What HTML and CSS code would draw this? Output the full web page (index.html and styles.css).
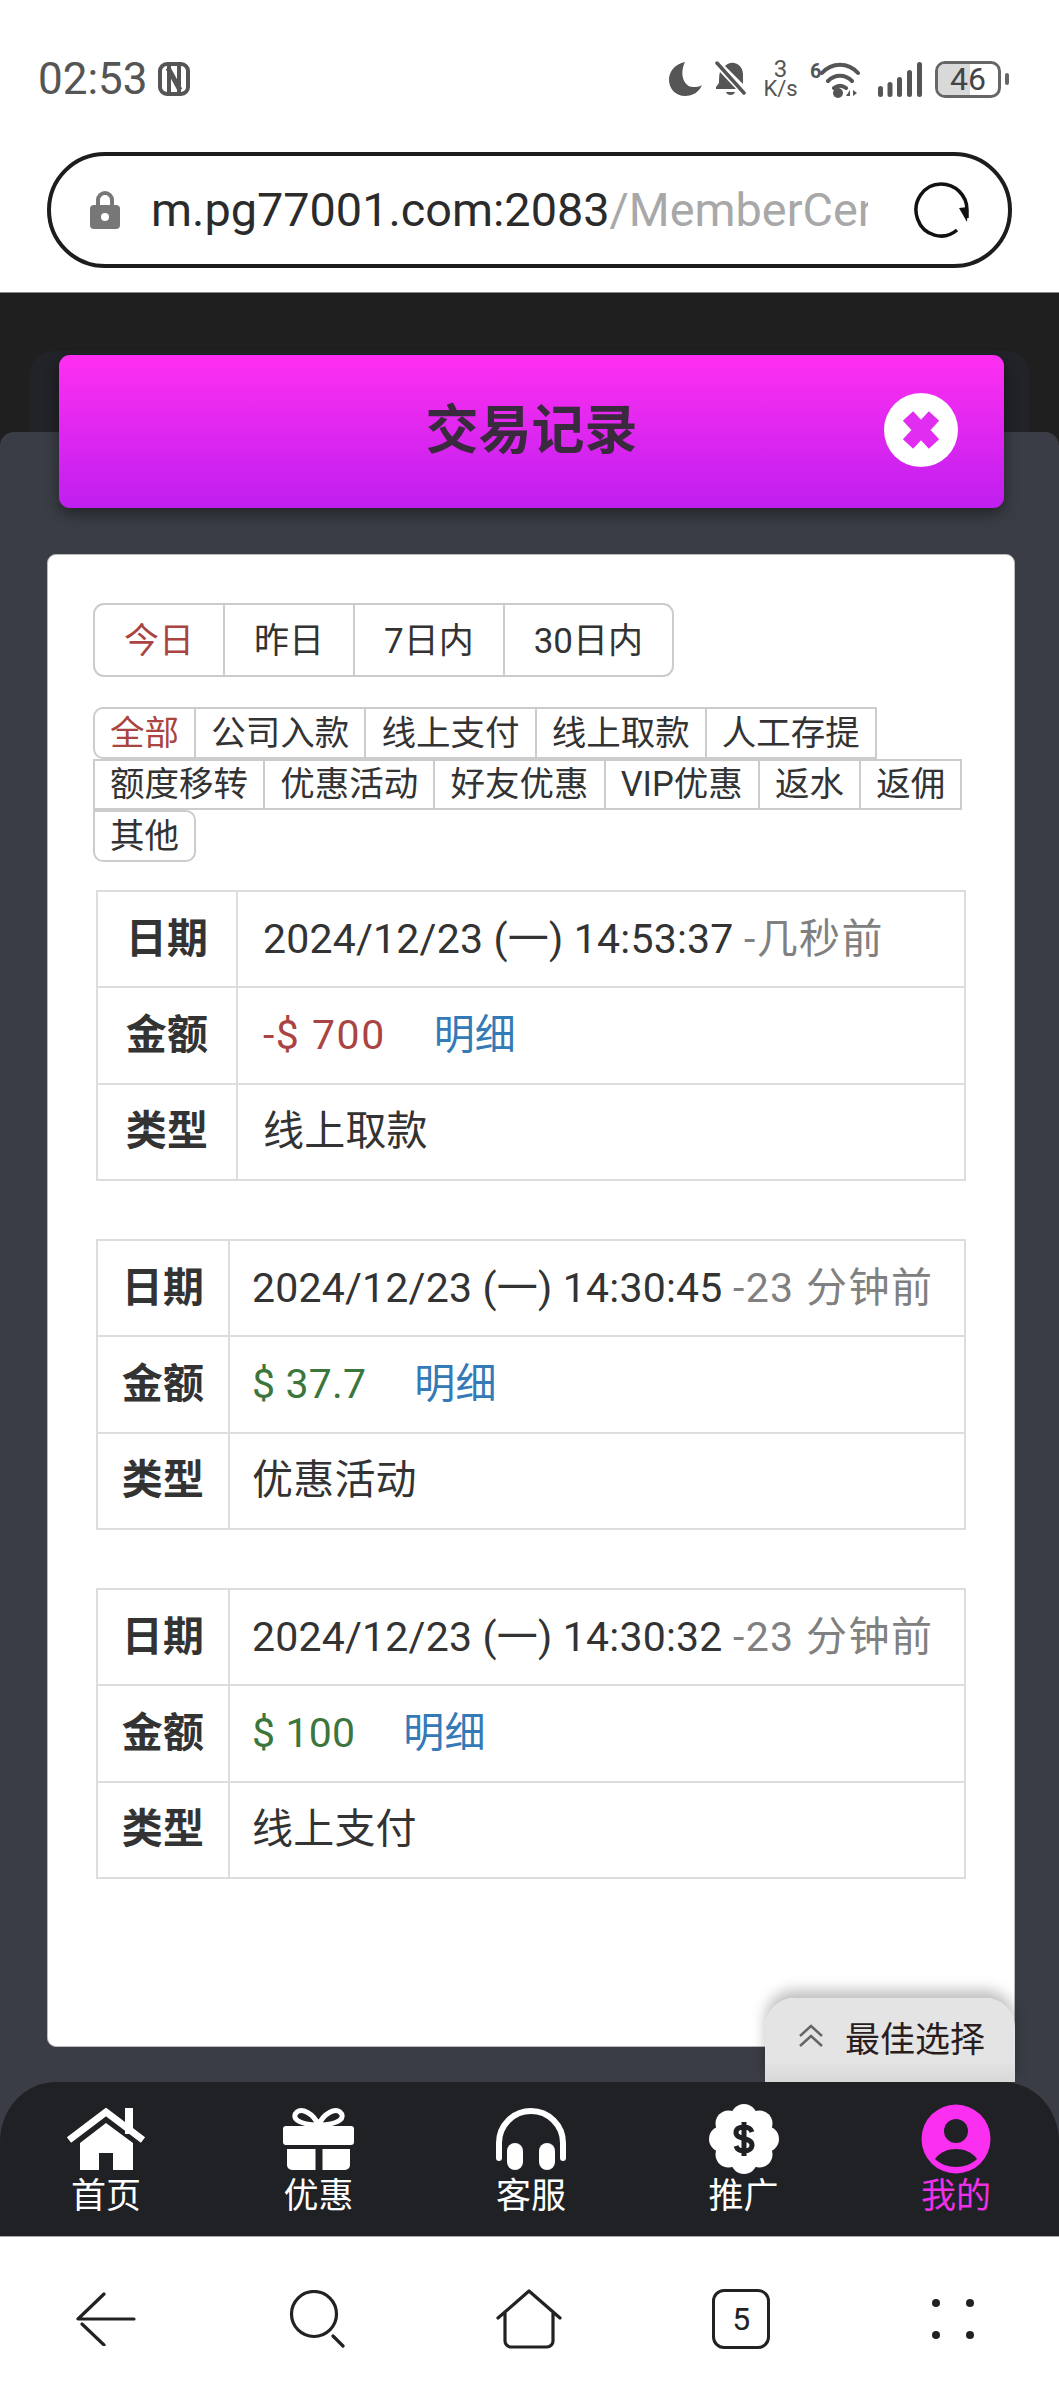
FILE: index.html
```html
<!DOCTYPE html>
<html lang="zh-CN">
<head>
<meta charset="utf-8">
<title>交易记录</title>
<link rel="stylesheet" href="styles.css">
</head>
<body>
<header class="chrome">
  <div class="status">
    <div class="clock">
      <span class="time">02:53</span>
      <svg class="nfc" viewBox="0 0 32 34"><rect x="2" y="2" width="28" height="30" rx="7" fill="none" stroke="#555" stroke-width="4"/><path d="M11 4v26M21 4v26" stroke="#555" stroke-width="4"/><path d="M10 6l12 22" stroke="#555" stroke-width="5"/></svg>
    </div>
    <div class="indicators">
      <svg class="i-moon" viewBox="0 0 33 34"><path d="M16 0C6 2 0 9 0 18c0 9 7 16 16 16 8 0 14-4 17-11-3 2-6 2-9 2C15 25 10 12 16 0z" fill="#555"/></svg>
      <svg class="i-bell" viewBox="0 0 31 36"><path d="M2 2l27 30" stroke="#555" stroke-width="3.500" stroke-linecap="round"/><path d="M5 11c-1 3-1 8-1 11l-3 4v2h20zM10 5c2-2 6-4 9-3 6 1 9 6 9 12v9z" fill="#555"/><path d="M11 31h9c-1 4-8 4-9 0z" fill="#555"/></svg>
      <div class="speed"><span class="speed-num">3</span><span>K/s</span></div>
      <div class="wifi">
        <span class="wifi-six">6</span>
        <svg viewBox="0 0 40 37" class="i-wifi"><path d="M2 12C12 1 28 1 38 12M8 20c7-7 17-7 24 0M14 27c4-3 8-3 12 0" fill="none" stroke="#555" stroke-width="4" stroke-linecap="round"/><circle cx="18" cy="32" r="5" fill="#555"/><path d="M26 35l4-6v6zM33 29l4 3-4 3z" fill="#555"/></svg>
      </div>
      <svg class="i-signal" viewBox="0 0 44 35"><g fill="#555"><rect x="0" y="24" width="5" height="11" rx="2.500"/><rect x="9.500" y="20" width="5" height="15" rx="2.500"/><rect x="19" y="15" width="5" height="20" rx="2.500"/><rect x="29" y="8" width="5" height="27" rx="2.500"/><rect x="39" y="0" width="5" height="35" rx="2.500"/></g></svg>
      <div class="battery"><span class="battery-fill"></span><span class="battery-num">46</span></div>
      <span class="battery-nub"></span>
    </div>
  </div>
  <div class="urlbar">
    <svg class="lock" viewBox="0 0 30 38"><path d="M8 16V9a7 7 0 0 1 14 0v7" fill="none" stroke="#777" stroke-width="4"/><rect y="14" width="30" height="24" rx="4" fill="#777"/><circle cx="15" cy="26" r="4" fill="#fff"/></svg>
    <div class="url"><span class="url-host">m.pg77001.com:2083</span><span class="url-path">/MemberCenter</span></div>
    <svg class="reload" viewBox="0 0 56 58"><path d="M28 3a25 26 0 1 0 16 46" fill="none" stroke="#111" stroke-width="3.500"/><path d="M28 3c14 0 26 11 26 26v8" fill="none" stroke="#111" stroke-width="3.500"/><path d="M46 27l8 14 1-15z" fill="#111"/></svg>
  </div>
</header>

<main class="stage">
  <div class="shell"></div>
  <div class="title-bar">
    <h1 class="title">交易记录</h1>
    <svg class="close" viewBox="0 0 74 74"><circle cx="37" cy="37" r="37" fill="#fff"/><path d="M24 23l26 28M50 23L24 51" stroke="#e12cf1" stroke-width="14" stroke-linecap="butt"/></svg>
  </div>
  <section class="sheet">
    <div class="card">
      <div class="ranges">
        <a class="range active">今日</a><a class="range">昨日</a><a class="range">7日内</a><a class="range">30日内</a>
      </div>
      <div class="filters">
        <a class="chip active round-l">全部</a><a class="chip">公司入款</a><a class="chip">线上支付</a><a class="chip">线上取款</a><a class="chip">人工存提</a>
        <a class="chip">额度移转</a><a class="chip">优惠活动</a><a class="chip">好友优惠</a><a class="chip">VIP优惠</a><a class="chip">返水</a><a class="chip">返佣</a>
        <a class="chip round-r">其他</a>
      </div>

      <table class="record wide">
        <tr><th>日期</th><td>2024/12/23 (一) 14:53:37 <span class="ago">-几秒前</span></td></tr>
        <tr><th>金额</th><td><span class="minus">-$ 700</span><a class="detail">明细</a></td></tr>
        <tr><th>类型</th><td>线上取款</td></tr>
      </table>
      <table class="record">
        <tr><th>日期</th><td>2024/12/23 (一) 14:30:45 <span class="ago">-23 分钟前</span></td></tr>
        <tr><th>金额</th><td><span class="plus">$ 37.7</span><a class="detail">明细</a></td></tr>
        <tr><th>类型</th><td>优惠活动</td></tr>
      </table>
      <table class="record">
        <tr><th>日期</th><td>2024/12/23 (一) 14:30:32 <span class="ago">-23 分钟前</span></td></tr>
        <tr><th>金额</th><td><span class="plus">$ 100</span><a class="detail">明细</a></td></tr>
        <tr><th>类型</th><td>线上支付</td></tr>
      </table>
    </div>
    <div class="best">
      <svg class="best-icon" viewBox="0 0 28 24"><path d="M3 12L14 2l11 10M3 22L14 12l11 10" fill="none" stroke="#666" stroke-width="2.500"/></svg>
      <span>最佳选择</span>
    </div>
  </section>
  <nav class="tabbar">
    <a class="tab">
      <svg class="tab-icon icon-home" viewBox="0 0 80 62"><path d="M59 0h8v26h-8z" fill="#fff"/><path d="M3 32L40 4l37 28" fill="none" stroke="#fff" stroke-width="7"/><path d="M40 15L14 35v27h19V45h14v17h20V35z" fill="#fff"/></svg>
      <span>首页</span>
    </a>
    <a class="tab">
      <svg class="tab-icon icon-gift" viewBox="0 0 71 62"><rect y="18" width="71" height="19" rx="3" fill="#fff"/><path d="M4 41h28.500v21H9a5 5 0 0 1-5-5zM39.500 41H67v16a5 5 0 0 1-5 5H39.500z" fill="#fff"/><path d="M35.500 17C30 5 19 0 14 4c-6 5 0 13 21.500 13zM35.500 17C41 5 52 0 57 4c6 5 0 13-21.500 13z" fill="none" stroke="#fff" stroke-width="5"/></svg>
      <span>优惠</span>
    </a>
    <a class="tab">
      <svg class="tab-icon icon-head" viewBox="0 0 70 62"><path d="M3 50V35a32 32 0 0 1 64 0v15" fill="none" stroke="#fff" stroke-width="6" stroke-linecap="round"/><rect x="11" y="35" width="16" height="27" rx="8" fill="#fff"/><rect x="43" y="35" width="16" height="27" rx="8" fill="#fff"/></svg>
      <span>客服</span>
    </a>
    <a class="tab">
      <svg class="tab-icon icon-round" viewBox="0 0 70 70"><g fill="#fff"><circle cx="35" cy="35" r="26"/><circle cx="35" cy="13" r="13"/><circle cx="35" cy="57" r="13"/><circle cx="13" cy="35" r="13"/><circle cx="57" cy="35" r="13"/><circle cx="19.500" cy="19.500" r="13"/><circle cx="50.500" cy="19.500" r="13"/><circle cx="19.500" cy="50.500" r="13"/><circle cx="50.500" cy="50.500" r="13"/></g><path d="M43 28c-1-3-4-5-8-5-5 0-8 2-8 5.500 0 8 16 4 16 12.500 0 3.500-3 6-8 6-4 0-7-2-8-5M35 18v34" fill="none" stroke="#202125" stroke-width="5"/></svg>
      <span>推广</span>
    </a>
    <a class="tab tab-on">
      <svg class="tab-icon icon-round" viewBox="0 0 70 70"><circle cx="35" cy="35" r="34.500" fill="#fb2ff0"/><circle cx="35" cy="27" r="12" fill="#202125"/><path d="M14 55c5-7 13-10 21-10s16 3 21 10c-5 5-13 8-21 8s-16-3-21-8z" fill="#202125"/></svg>
      <span>我的</span>
    </a>
  </nav>
</main>

<footer class="toolbar">
  <svg class="tool tool-back" viewBox="0 0 60 54"><path d="M28 2L2 27h56M6 32l22 21" fill="none" stroke="#222" stroke-width="3.200" stroke-linecap="round" stroke-linejoin="round"/></svg>
  <svg class="tool tool-search" viewBox="0 0 60 58"><circle cx="26" cy="24" r="22.500" fill="none" stroke="#222" stroke-width="3.200"/><path d="M45 46l10 10" stroke="#222" stroke-width="3.200" stroke-linecap="round"/></svg>
  <svg class="tool tool-home" viewBox="0 0 66 60"><path d="M2 29L33 2l31 27M9 24v28a6 6 0 0 0 6 6h36a6 6 0 0 0 6-6V24" fill="none" stroke="#222" stroke-width="3.200" stroke-linecap="round" stroke-linejoin="round"/></svg>
  <div class="tabs-count">5</div>
  <svg class="tool tool-dots" viewBox="0 0 42 40"><g fill="#222"><circle cx="4" cy="4" r="4"/><circle cx="38" cy="4" r="4"/><circle cx="4" cy="36" r="4"/><circle cx="38" cy="36" r="4"/></g></svg>
</footer>
</body>
</html>
```

FILE: styles.css
```css
* { box-sizing: border-box; }
html, body { margin: 0; padding: 0; }
body {
  width: 1059px;
  height: 2400px;
  overflow: hidden;
  background: #fff;
  color: #333;
  font-family: Roboto, "Noto Sans CJK SC", "Noto Sans", sans-serif;
}

/* browser chrome */
.chrome { height: 292px; padding-top: 60px; background: #fff; }
.status { display: flex; justify-content: space-between; height: 40px; padding: 0 50px 0 38px; }
.clock { display: flex; align-items: center; gap: 10px; height: 38px; }
.time { font-size: 44px; line-height: 38px; color: #555; }
.nfc { width: 32px; height: 34px; }
.indicators { display: flex; align-items: center; height: 38px; }
.i-moon { width: 33px; height: 34px; margin-right: 13px; }
.i-bell { width: 31px; height: 36px; margin-right: 17px; }
.speed { display: flex; flex-direction: column; align-items: center; width: 35px; margin-right: 12px; color: #555; }
.speed span { font-size: 22px; line-height: 20px; }
.speed .speed-num { font-size: 24px; }
.wifi { display: flex; width: 50px; margin-right: 18px; align-items: flex-start; height: 37px; }
.wifi-six { width: 10px; font-size: 20px; line-height: 20px; font-weight: 700; color: #555; }
.i-wifi { width: 40px; height: 37px; }
.i-signal { width: 44px; height: 35px; margin-right: 13px; }
.battery { width: 66px; height: 37px; border: 3px solid #666; border-radius: 10px; overflow: hidden; display: flex; align-items: center; }
.battery-fill { display: block; flex: none; width: 32px; height: 100%; background: #d9d9d9; }
.battery-num { flex: none; width: 60px; margin-left: -32px; text-align: center; font-size: 32px; line-height: 31px; color: #444; position: relative; }
.battery-nub { width: 4px; height: 12px; margin-left: 4px; background: #666; border-radius: 2px; }

.urlbar {
  display: flex; align-items: center;
  height: 116px; margin: 52px 47px 0 47px; padding: 0 41px 0 39px;
  border: 4px solid #1d1d1d; border-radius: 58px;
}
.lock { flex: none; width: 30px; height: 38px; margin-right: 31px; }
.url { flex: none; width: 717px; overflow: hidden; white-space: nowrap; font-size: 46.800px; line-height: 60px; }
.url-host { color: #2b2b2b; }
.url-path { color: #a8a8a8; }
.reload { flex: none; width: 56px; height: 58px; margin-left: 45px; }

/* page */
.stage {
  position: relative;
  display: flex; flex-direction: column;
  height: 1944px; padding-top: 58px;
  background: #1f1f1f;
  border-top: 1px solid #888;
}
.shell { flex: none; height: 81px; margin: 0 30px; background: #212328; border-radius: 22px 22px 0 0; }
.title-bar {
  position: absolute; left: 59px; top: 62px; z-index: 2;
  display: flex; align-items: center; justify-content: center;
  width: 945px; height: 153px;
  background: linear-gradient(#ff2ff1, #bf1fef);
  border-radius: 11px;
  box-shadow: 0 6px 14px rgba(0, 0, 0, .4);
}
.title { margin: 0; font-size: 53px; font-weight: 700; line-height: 1; color: #3a2a3e; }
.close { position: absolute; right: 46px; top: 38px; width: 74px; height: 74px; }

.sheet {
  position: relative;
  display: flex; flex: none; flex-direction: column;
  height: 1710px; padding: 122px 44px 95px 47px;
  background: #3a3d45;
  border-radius: 14px 14px 0 0;
}
.card {
  flex: 1;
  padding: 48px 0 0 45px;
  background: #fff;
  border: 1px solid #bbb;
  border-radius: 9px;
}

.ranges { display: inline-flex; height: 74px; border: 2px solid #ccc; border-radius: 11px; vertical-align: top; }
.range { display: flex; align-items: center; padding: 0 29px 6px; font-size: 35px; color: #333; }
.range + .range { border-left: 2px solid #ccc; }
.range.active { color: #a94442; }

.filters { display: flex; flex-wrap: wrap; width: 900px; margin-top: 30px; }
.chip {
  display: flex; align-items: center; justify-content: center;
  height: 51.500px; padding: 0 15.100px 6px; margin: 0 -2px 0 0;
  font-size: 34.500px; color: #333;
  border: 2px solid #ccc;
  background: #fff;
}
.chip.active { color: #a94442; }
.round-l { border-radius: 10px 0 0 10px; }
.round-r { border-radius: 0 10px 10px 10px; }

.record {
  width: 870px; height: 290px; margin: 28px 0 57.500px 3px;
  border-collapse: collapse;
  font-size: 41px;
  letter-spacing: .2px;
}
.record + .record { margin-top: 0; }
.record th, .record td { height: 96.500px; padding: 0 0 7px 22px; border: 2px solid #ddd; text-align: left; white-space: nowrap; }
.record.wide td { padding-left: 25px; }
.record th { width: 132px; padding: 0 0 7px; text-align: center; font-weight: 700; color: #333; }
.record.wide th { width: 140px; }
.record td { color: #333; }
.record tr + tr th, .record tr + tr td { padding-bottom: 9px; }
.ago { color: #808080; letter-spacing: 1.400px; }
.minus { color: #a94442; letter-spacing: 1.500px; }
.plus { color: #3c763d; }
.detail { margin-left: 48px; color: #337ab7; }

.best {
  position: absolute; right: 44px; bottom: 60px; z-index: 1;
  display: flex; align-items: center; gap: 20px;
  width: 250px; height: 84px; padding: 0 0 8px 32px;
  font-size: 35px; color: #2a1d1d;
  background: linear-gradient(#e4e4e4 75%, #d8d8d8);
  border-radius: 30px 30px 0 0;
  box-shadow: 0 -8px 14px rgba(0, 0, 0, .25);
}
.best-icon { width: 28px; height: 24px; }

.tabbar {
  position: relative; z-index: 2;
  display: grid; grid-template-columns: repeat(5, 206px); column-gap: 6.500px;
  height: 154px; margin-top: -60px; padding: 24px 0 0 3px;
  background: #202125;
  border-radius: 56px 56px 0 0 / 60px 60px 0 0;
}
.tab { display: flex; flex-direction: column; align-items: center; font-size: 35px; line-height: 40px; color: #fff; }
.tab-icon { height: 62px; margin: 2px 0 7px; }
.icon-home { width: 80px; }
.icon-gift { width: 71px; }
.icon-head { width: 70px; }
.tab-icon.icon-round { width: 70px; height: 70px; margin: -2px 0 3px; }
.tab-on { color: #f02fe8; }

/* browser toolbar */
.toolbar {
  display: grid; grid-template-columns: repeat(5, 1fr);
  justify-items: center; align-items: center;
  height: 164px;
  background: #fff;
  border-top: 1px solid #aaa;
}
.tool-back { width: 60px; height: 54px; }
.tool-search { width: 60px; height: 58px; }
.tool-home { width: 66px; height: 60px; }
.tool-dots { width: 42px; height: 40px; }
.tabs-count {
  display: flex; align-items: center; justify-content: center;
  width: 58px; height: 60px;
  font-size: 32px; color: #222;
  border: 3.500px solid #222; border-radius: 12px;
}
```
